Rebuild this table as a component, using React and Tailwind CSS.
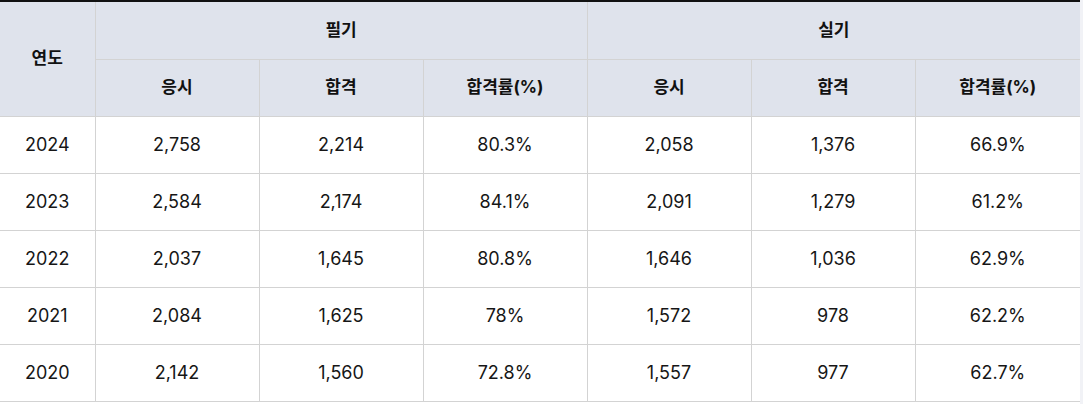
import React from "react";

const rows = [
  ["2024", "2,758", "2,214", "80.3%", "2,058", "1,376", "66.9%"],
  ["2023", "2,584", "2,174", "84.1%", "2,091", "1,279", "61.2%"],
  ["2022", "2,037", "1,645", "80.8%", "1,646", "1,036", "62.9%"],
  ["2021", "2,084", "1,625", "78%", "1,572", "978", "62.2%"],
  ["2020", "2,142", "1,560", "72.8%", "1,557", "977", "62.7%"],
];

export default function App() {
  const th = "border border-[#d3d3d3] bg-[#dfe3ec] font-bold text-[17px] text-[#111] p-0 text-center align-middle";
  const td = "border border-[#d3d3d3] text-[18px] text-[#161616] p-0 text-center align-middle";
  return (
    <div className="flex w-[1083px] h-[404px] bg-white overflow-hidden" style={{ fontFamily: "Inter, 'Noto Sans CJK KR', sans-serif" }}>
      <div className="w-[1080px] shrink-0">
        <div className="h-[2px] bg-[#111]" />
        <table className="border-collapse table-fixed w-[1080px] border-l-0">
          <colgroup>
            <col className="w-[95px]" />
            <col className="w-[164px]" />
            <col className="w-[164px]" />
            <col className="w-[164px]" />
            <col className="w-[164px]" />
            <col className="w-[164px]" />
            <col className="w-[165px]" />
          </colgroup>
          <thead>
            <tr className="h-[57px]">
              <th rowSpan={2} className={th + " border-l-0 border-t-0"}>연도</th>
              <th colSpan={3} className={th + " border-t-0"}>필기</th>
              <th colSpan={3} className={th + " border-t-0 border-r-0"}>실기</th>
            </tr>
            <tr className="h-[57px]">
              <th className={th}>응시</th>
              <th className={th}>합격</th>
              <th className={th}>합격률(%)</th>
              <th className={th}>응시</th>
              <th className={th}>합격</th>
              <th className={th + " border-r-0"}>합격률(%)</th>
            </tr>
          </thead>
          <tbody>
            {rows.map((r) => (
              <tr key={r[0]} className="h-[57px]">
                {r.map((c, i) => (
                  <td key={i} className={td + (i === 0 ? " border-l-0" : "") + (i === 6 ? " border-r-0" : "")}>
                    {c}
                  </td>
                ))}
              </tr>
            ))}
          </tbody>
        </table>
      </div>
      <div className="flex-1 bg-[#f1f2f6]" />
    </div>
  );
}
